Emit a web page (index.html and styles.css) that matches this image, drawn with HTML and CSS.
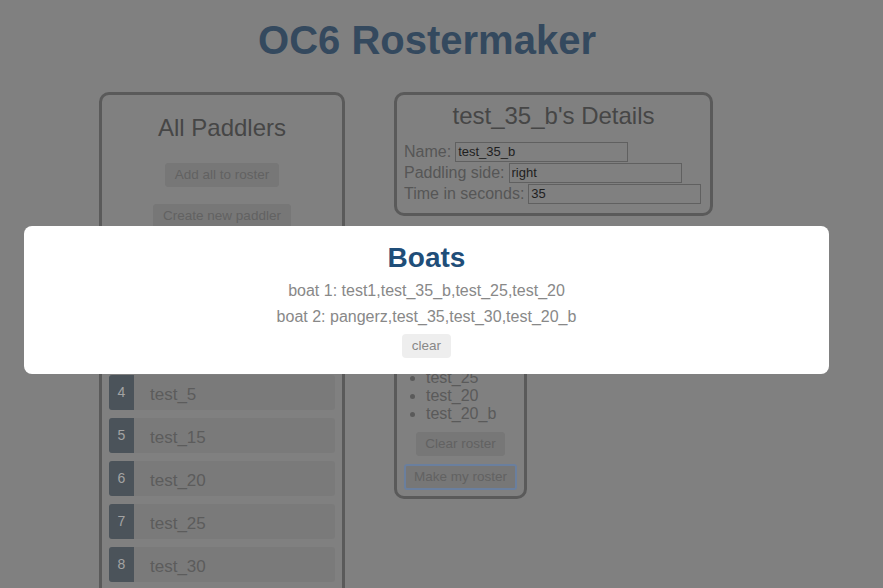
FILE: index.html
```html
<!DOCTYPE html>
<html>
<head>
<meta charset="utf-8">
<link rel="stylesheet" href="styles.css">
</head>
<body>
<div class="page">
  <h1 class="title">OC6 Rostermaker</h1>
  <div class="columns">
    <section class="panel paddlers">
      <h2 class="panel-title">All Paddlers</h2>
      <button class="btn">Add all to roster</button>
      <button class="btn">Create new paddler</button>
      <ul class="plist">
        <li class="pitem"><span class="num">1</span><span class="pname">test1</span></li>
        <li class="pitem"><span class="num">2</span><span class="pname">pangerz</span></li>
        <li class="pitem"><span class="num">3</span><span class="pname">test_35_b</span></li>
        <li class="pitem"><span class="num">4</span><span class="pname">test_5</span></li>
        <li class="pitem"><span class="num">5</span><span class="pname">test_15</span></li>
        <li class="pitem"><span class="num">6</span><span class="pname">test_20</span></li>
        <li class="pitem"><span class="num">7</span><span class="pname">test_25</span></li>
        <li class="pitem"><span class="num">8</span><span class="pname">test_30</span></li>
      </ul>
    </section>
    <div class="right">
      <section class="panel details">
        <h2 class="panel-title">test_35_b's Details</h2>
        <div class="field"><label>Name:</label><input class="inp" value="test_35_b"></div>
        <div class="field"><label>Paddling side:</label><input class="inp" value="right"></div>
        <div class="field"><label>Time in seconds:</label><input class="inp" value="35"></div>
      </section>
      <section class="panel roster">
        <h2 class="panel-title small">Roster</h2>
        <ul class="rlist">
          <li>test1</li>
          <li>pangerz</li>
          <li>test_35_b</li>
          <li>test_35</li>
          <li>test_30</li>
          <li>test_25</li>
          <li>test_20</li>
          <li>test_20_b</li>
        </ul>
        <button class="btn clear-roster">Clear roster</button>
        <button class="btn outline">Make my roster</button>
      </section>
    </div>
  </div>
</div>
<div class="modal">
  <h2 class="modal-title">Boats</h2>
  <p class="boat">boat 1: test1,test_35_b,test_25,test_20</p>
  <p class="boat">boat 2: pangerz,test_35,test_30,test_20_b</p>
  <button class="clear">clear</button>
</div>
</body>
</html>
```
FILE: styles.css
```css
html, body {
  margin: 0;
  padding: 0;
  background: #808080;
  font-family: "Liberation Sans", Arial, sans-serif;
  overflow: hidden;
  height: 588px;
}
.page {
  width: 854px;
  height: 588px;
  overflow: hidden;
}
.title {
  margin: 0;
  padding-top: 17px;
  text-align: center;
  font-size: 40px;
  line-height: 46px;
  font-weight: bold;
  color: #34495e;
}
.columns {
  display: flex;
  align-items: flex-start;
  gap: 49px;
  margin-top: 29px;
  padding-left: 99px;
}
.panel {
  border: 3px solid #5a5a5a;
  border-radius: 10px;
  box-sizing: border-box;
  display: flex;
  flex-direction: column;
  align-items: center;
}
.paddlers {
  width: 246px;
  height: 560px;
  padding: 0 7px 0 7px;
}
.panel-title {
  margin: 0;
  font-weight: normal;
  font-size: 24px;
  color: #464646;
}
.paddlers .panel-title {
  margin-top: 20px;
  line-height: 26px;
}
.btn {
  font-family: "Liberation Sans", Arial, sans-serif;
  font-size: 13.5px;
  color: #626262;
  background: #777777;
  border: 1px solid #777777;
  border-radius: 3px;
  padding: 3px 9px;
  line-height: 16px;
  white-space: nowrap;
}
.paddlers .btn:nth-of-type(1) { margin-top: 22px; }
.paddlers .btn:nth-of-type(2) { margin-top: 17px; }
.plist {
  list-style: none;
  margin: 18px 0 0;
  padding: 0;
  width: 100%;
  display: flex;
  flex-direction: column;
  gap: 8px;
}
.pitem {
  display: flex;
  height: 35px;
  background: #7a7a7a;
  border-radius: 3px;
  overflow: hidden;
}
.num {
  width: 25px;
  background: #4b535a;
  color: #a3a3a3;
  font-size: 14px;
  text-align: center;
  padding-top: 9px;
  box-sizing: border-box;
}
.pname {
  margin-left: 16px;
  font-size: 17px;
  color: #5c5c5c;
  line-height: 39px;
}
.right {
  display: flex;
  flex-direction: column;
  align-items: flex-start;
  gap: 13px;
}
.details {
  width: 319px;
  height: 124px;
  align-items: flex-start;
  padding: 0 7px;
}
.details .panel-title {
  align-self: center;
  margin-top: 7px;
  line-height: 28px;
  margin-bottom: 11px;
}
.field {
  display: flex;
  align-items: center;
  height: 21px;
  font-size: 16px;
  color: #565656;
  white-space: nowrap;
}
.field label {
  margin-right: 4px;
  flex-shrink: 0;
}
.inp {
  flex-shrink: 0;
  width: 173px;
  height: 20px;
  box-sizing: border-box;
  background: transparent;
  border: 1px solid #606060;
  font-family: "Liberation Sans", Arial, sans-serif;
  font-size: 13px;
  color: #1e1e1e;
  padding: 1px 2px;
}
.roster {
  width: 133px;
  padding: 0 6px 6px;
}
.roster .panel-title.small {
  margin-top: 10px;
  font-size: 20px;
}
.rlist {
  margin: 14px 0 0;
  padding-left: 23px;
  align-self: stretch;
  font-size: 16px;
  line-height: 18px;
  color: #5a5a5a;
}
.roster .clear-roster {
  margin-top: 9px;
  padding: 3px 8px;
}
.roster .btn.outline {
  margin-top: 8px;
  border: 2px solid #6a7f9e;
  padding: 3px 8px;
}
.modal {
  position: absolute;
  left: 24px;
  top: 226px;
  width: 805px;
  height: 148px;
  background: #ffffff;
  border-radius: 8px;
  display: flex;
  flex-direction: column;
  align-items: center;
  box-sizing: border-box;
  padding-top: 16px;
}
.modal-title {
  margin: 0;
  font-size: 28px;
  line-height: 32px;
  font-weight: bold;
  color: #1f4e79;
}
.boat {
  margin: 0;
  font-size: 16px;
  line-height: 26px;
  color: #888888;
}
.modal-title + .boat { margin-top: 4px; }
.clear {
  margin-top: 4px;
  font-family: "Liberation Sans", Arial, sans-serif;
  font-size: 13.5px;
  color: #888888;
  background: #eeeeee;
  border: none;
  border-radius: 4px;
  padding: 4px 10px;
  line-height: 16px;
}
```
